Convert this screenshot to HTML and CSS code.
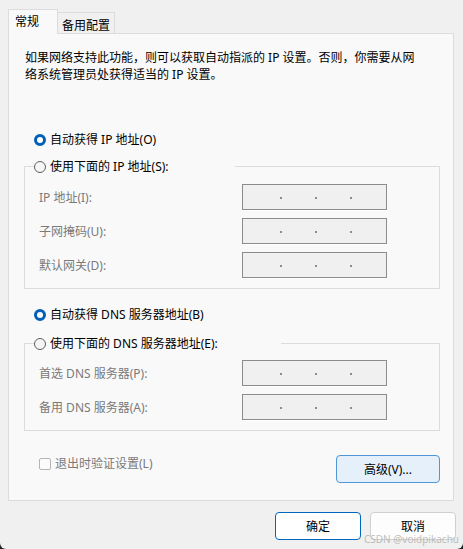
FILE: index.html
```html
<!DOCTYPE html>
<html lang="zh-CN">
<head>
<meta charset="utf-8">
<title>Internet 协议版本 4 (TCP/IPv4) 属性</title>
<link rel="stylesheet" href="styles.css">
</head>
<body>
<div class="window">
  <div class="tabs">
    <div class="tab tab-active">常规</div>
    <div class="tab">备用配置</div>
  </div>
  <div class="panel">
    <p class="desc">如果网络支持此功能，则可以获取自动指派的 IP 设置。否则，你需要从网络系统管理员处获得适当的 IP 设置。</p>

    <div class="radio-row radio-top">
      <span class="radio radio-on"></span><span>自动获得 IP 地址(O)</span>
    </div>

    <fieldset class="group group-ip">
      <legend class="legend legend-ip">
        <span class="radio"></span><span>使用下面的 IP 地址(S):</span>
      </legend>
      <div class="fields">
        <span class="label">IP 地址(I):</span>
        <div class="ipbox"><i></i><i></i><i></i></div>
        <span class="label">子网掩码(U):</span>
        <div class="ipbox"><i></i><i></i><i></i></div>
        <span class="label">默认网关(D):</span>
        <div class="ipbox"><i></i><i></i><i></i></div>
      </div>
    </fieldset>

    <div class="radio-row radio-dns">
      <span class="radio radio-on"></span><span>自动获得 DNS 服务器地址(B)</span>
    </div>

    <fieldset class="group group-dns">
      <legend class="legend legend-dns">
        <span class="radio"></span><span>使用下面的 DNS 服务器地址(E):</span>
      </legend>
      <div class="fields">
        <span class="label">首选 DNS 服务器(P):</span>
        <div class="ipbox"><i></i><i></i><i></i></div>
        <span class="label">备用 DNS 服务器(A):</span>
        <div class="ipbox"><i></i><i></i><i></i></div>
      </div>
    </fieldset>

    <div class="bottom-row">
      <label class="check"><span class="checkbox"></span><span>退出时验证设置(L)</span></label>
      <button class="btn btn-adv">高级(V)...</button>
    </div>
  </div>

  <div class="actions">
    <button class="btn btn-ok">确定</button>
    <button class="btn btn-cancel">取消</button>
  </div>
  <div class="watermark">CSDN @voidpikachu</div>
</div>
</body>
</html>
```

FILE: styles.css
```css
html {
  background: #202020;
}
body {
  margin: 0;
  width: 463px;
  height: 549px;
  overflow: hidden;
  background: #f0f0f0;
  border-radius: 0 0 6px 6px;
  font-family: "Noto Sans", "Noto Sans CJK SC", sans-serif;
  font-size: 12px;
  line-height: 17px;
  color: #000;
}
.window {
  position: relative;
  padding: 9px 7px 0 8px;
  height: 549px;
  box-sizing: border-box;
}
.tabs {
  display: flex;
  align-items: flex-end;
  height: 24px;
}
.tab {
  box-sizing: border-box;
  height: 21px;
  width: 57px;
  padding: 4px 0 0 4px;
  background: #f0f0f0;
  border: 1px solid #dcdcdc;
  border-left: none;
  border-bottom: none;
  line-height: 17px;
}
.tab-active {
  position: relative;
  z-index: 1;
  height: 25px;
  width: 50px;
  margin-bottom: -1px;
  padding: 3px 0 0 6px;
  background: #f9f9f9;
  border-left: 1px solid #dcdcdc;
}
.panel {
  box-sizing: border-box;
  width: 446px;
  height: 468px;
  background: #f9f9f9;
  border: 1px solid #dcdcdc;
  padding: 15px 0 0 16px;
}
.desc {
  margin: 0;
  width: 400px;
}
.radio-row,
.legend {
  display: flex;
  align-items: center;
  gap: 4px;
  height: 17px;
}
.radio-row {
  margin-left: 9px;
}
.radio-top {
  margin-top: 48px;
}
.radio-dns {
  margin-top: 17px;
}
.radio {
  box-sizing: border-box;
  width: 12px;
  height: 12px;
  border-radius: 50%;
  border: 1px solid #5f5f5f;
  background: #f6f6f6;
  flex: none;
}
.radio-on {
  border: 3.5px solid #005fb8;
  background: #fff;
}
.group {
  box-sizing: border-box;
  width: 416px;
  margin: 10px 0 0 -1px;
  padding: 0 0 10px 0;
  border: 1px solid #dcdcdc;
  min-width: 0;
}
.group-dns {
  margin-top: 12px;
}
.legend {
  margin-left: 9px;
  padding: 0;
  box-sizing: border-box;
}
.legend-ip {
  width: 201px;
}
.legend-dns {
  width: 247px;
}
.fields {
  display: grid;
  grid-template-columns: 203px 145px;
  grid-auto-rows: 26px;
  row-gap: 8px;
  align-items: center;
  padding-left: 14px;
  margin-top: 9px;
}
.group-dns .fields {
  margin-top: 8px;
}
.label {
  color: #7a7a7a;
}
.ipbox {
  box-sizing: border-box;
  height: 26px;
  border: 1px solid #8c8c8c;
  background: #f0f0f0;
  box-shadow: 0 1px 0 #ffffff;
  display: flex;
  align-items: flex-end;
  gap: 33px;
  padding: 0 0 10px 37px;
}
.ipbox i {
  display: block;
  width: 2px;
  height: 2px;
  background: #8a8a9a;
}
.bottom-row {
  display: flex;
  justify-content: space-between;
  align-items: flex-start;
  margin-top: 24px;
  padding-right: 13px;
}
.check {
  display: flex;
  align-items: center;
  gap: 4px;
  height: 17px;
  margin-left: 14px;
  color: #7a7a7a;
}
.checkbox {
  box-sizing: border-box;
  width: 12px;
  height: 12px;
  border: 1px solid #b5b5b5;
  border-radius: 2px;
  background: #fbfbfb;
}
.btn {
  box-sizing: border-box;
  height: 28px;
  font: inherit;
  color: #000;
  border-radius: 4px;
  padding: 0;
  cursor: default;
}
.btn-adv {
  width: 104px;
  background: #e5f0fb;
  border: 1px solid #4e96d8;
}
.actions {
  display: flex;
  justify-content: flex-end;
  gap: 9px;
  margin-top: 11px;
}
.btn-ok {
  width: 86px;
  background: #ffffff;
  border: 1px solid #0067c0;
}
.btn-cancel {
  width: 86px;
  background: #fdfdfd;
  border: 1px solid #d0d0d0;
}
.watermark {
  position: absolute;
  right: 4px;
  bottom: 4px;
  font-size: 10px;
  line-height: 12px;
  color: rgba(170, 170, 170, 0.75);
}
```
